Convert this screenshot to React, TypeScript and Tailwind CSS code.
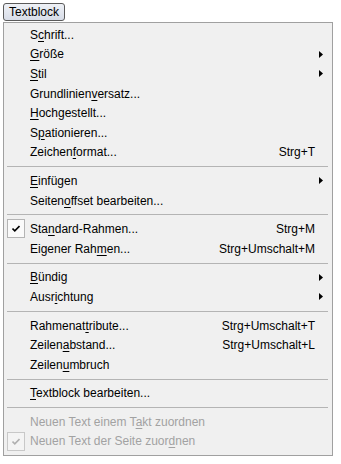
type Item =
  | { sep: true }
  | {
      sep?: false
      label: string
      u: number
      shortcut?: string
      sub?: boolean
      checked?: boolean
      disabled?: boolean
    }

const items: Item[] = [
  { label: 'Schrift...', u: 1 },
  { label: 'Größe', u: 0, sub: true },
  { label: 'Stil', u: 0, sub: true },
  { label: 'Grundlinienversatz...', u: 11 },
  { label: 'Hochgestellt...', u: 0 },
  { label: 'Spationieren...', u: 1 },
  { label: 'Zeichenformat...', u: 7, shortcut: 'Strg+T' },
  { sep: true },
  { label: 'Einfügen', u: 0, sub: true },
  { label: 'Seitenoffset bearbeiten...', u: 6 },
  { sep: true },
  { label: 'Standard-Rahmen...', u: 3, shortcut: 'Strg+M', checked: true },
  { label: 'Eigener Rahmen...', u: 11, shortcut: 'Strg+Umschalt+M' },
  { sep: true },
  { label: 'Bündig', u: 0, sub: true },
  { label: 'Ausrichtung', u: 4, sub: true },
  { sep: true },
  { label: 'Rahmenattribute...', u: 8, shortcut: 'Strg+Umschalt+T' },
  { label: 'Zeilenabstand...', u: 6, shortcut: 'Strg+Umschalt+L' },
  { label: 'Zeilenumbruch', u: 6 },
  { sep: true },
  { label: 'Textblock bearbeiten...', u: 0 },
  { sep: true },
  { label: 'Neuen Text einem Takt zuordnen', u: 18, disabled: true },
  { label: 'Neuen Text der Seite zuordnen', u: 25, disabled: true, checked: true },
]

function Mnemonic({ text, u }: { text: string; u: number }) {
  return (
    <span>
      {text.slice(0, u)}
      <span className="underline underline-offset-[2px]">{text.charAt(u)}</span>
      {text.slice(u + 1)}
    </span>
  )
}

function Check({ disabled }: { disabled?: boolean }) {
  return (
    <div
      className={`absolute left-[3px] top-[0px] w-[18px] h-[19px] border flex items-center justify-center ${
        disabled ? 'border-[#c8c8c8] bg-[#f4f4f4]' : 'border-[#b4b4b4] bg-[#fafafa]'
      }`}
    >
      <svg width="8" height="7" viewBox="0 0 8 7">
        <path d="M0.5 3.5 L2.8 5.8 L7.5 1" fill="none" stroke={disabled ? '#b0b0b0' : '#000'} strokeWidth="1.6" />
      </svg>
    </div>
  )
}

export default function App() {
  return (
    <div className="w-[341px] h-[464px] bg-white relative text-[12px] text-black" style={{ fontFamily: 'Tahoma, "Liberation Sans", sans-serif' }}>
      <div className="absolute left-[3px] top-[3px] w-[62px] h-[18px] border border-[#5a5a5a] rounded-[3px] bg-gradient-to-b from-[#eef1f6] to-[#d8dde8] flex items-center justify-center leading-none">
        Textblock
      </div>
      <div className="absolute left-[3px] top-[22px] w-[330px] h-[434px] bg-[#f0f0f0] border border-[#a0a0a0] py-[2px] flex flex-col">
        {items.map((it, i) =>
          it.sep ? (
            <div key={i} className="h-[9px] flex items-center pl-[3px] pr-[4px]">
              <div className="h-px w-full bg-[#b4b4b4]" />
            </div>
          ) : (
            <div
              key={i}
              className={`relative h-[19.6px] flex items-center pl-[26px] pr-[17px] ${
                it.disabled ? 'text-[#a2a2a2]' : ''
              }`}
            >
              {it.checked && <Check disabled={it.disabled} />}
              <Mnemonic text={it.label} u={it.u} />
              {it.shortcut && <span className="ml-auto">{it.shortcut}</span>}
              {it.sub && (
                <svg className="absolute right-[9px] top-[6px]" width="4" height="7" viewBox="0 0 4 7">
                  <path d="M0 0 L4 3.5 L0 7 Z" fill="#000" />
                </svg>
              )}
            </div>
          )
        )}
      </div>
    </div>
  )
}
